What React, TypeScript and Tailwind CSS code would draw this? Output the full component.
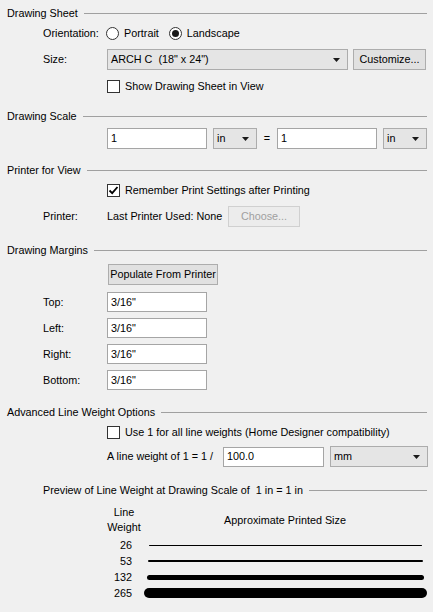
import React from "react";

const FONT = "font-['Liberation_Sans',Arial,sans-serif]";

function SectionHeader({ title, indent = false, className = "" }: { title: string; indent?: boolean; className?: string }) {
  return (
    <div className={`flex items-center h-[14px] pr-[6px] ${indent ? "pl-[43px]" : "pl-[7px]"} ${className}`}>
      <span className="whitespace-pre">{title}</span>
      <div className="flex-1 h-px bg-[#a0a0a0] ml-[6px]" />
    </div>
  );
}

function Arrow() {
  return (
    <svg width="7" height="4" viewBox="0 0 7 4" className="shrink-0">
      <path d="M0 0 L7 0 L3.5 4 Z" fill="#1a1a1a" />
    </svg>
  );
}

function Select({ value, className = "" }: { value: string; className?: string }) {
  return (
    <div
      className={`flex items-center justify-between h-[21px] pl-[3px] pr-[7px] bg-[#e5e5e5] border border-[#acacac] ${className}`}
    >
      <span className="whitespace-pre">{value}</span>
      <Arrow />
    </div>
  );
}

function Input({ value, className = "" }: { value: string; className?: string }) {
  return (
    <div className={`flex items-center h-[20px] pl-[3px] bg-white border border-[#a5a5a5] ${className}`}>
      {value}
    </div>
  );
}

function Button({ label, disabled = false, className = "" }: { label: string; disabled?: boolean; className?: string }) {
  return (
    <div
      className={`flex items-center justify-center h-[21px] border whitespace-nowrap ${
        disabled ? "bg-[#ececec] border-[#d0d0d0] text-[#a0a0a0]" : "bg-[#e1e1e1] border-[#adadad]"
      } ${className}`}
    >
      {label}
    </div>
  );
}

function Checkbox({ checked = false, label }: { checked?: boolean; label: string }) {
  return (
    <div className="flex items-center h-[14px] gap-[5px] pl-[107px]">
      <div className="w-[13px] h-[13px] border border-[#333333] bg-white flex items-center justify-center">
        {checked && (
          <svg width="11" height="11" viewBox="0 0 11 11">
            <path d="M1.5 5.5 L4.2 8.2 L9.5 2" fill="none" stroke="#000" strokeWidth="1.8" />
          </svg>
        )}
      </div>
      <span className="whitespace-nowrap">{label}</span>
    </div>
  );
}

function Radio({ checked = false, label }: { checked?: boolean; label: string }) {
  return (
    <div className="flex items-center gap-[5px]">
      <div className="w-[13px] h-[13px] rounded-full border border-[#333333] bg-white flex items-center justify-center">
        {checked && <div className="w-[7px] h-[7px] rounded-full bg-[#1a1a1a]" />}
      </div>
      <span>{label}</span>
    </div>
  );
}

function LabelRow({ label, children, className = "" }: { label: string; children: React.ReactNode; className?: string }) {
  return (
    <div className={`flex items-center pl-[43px] ${className}`}>
      <span className="w-[64px] shrink-0">{label}</span>
      {children}
    </div>
  );
}

const weights = [
  { n: "26", ml: "ml-[17px]", w: "w-[273px]", h: "h-[1px]" },
  { n: "53", ml: "ml-[16px]", w: "w-[275px]", h: "h-[2px]" },
  { n: "132", ml: "ml-[15px]", w: "w-[277px]", h: "h-[5px]" },
  { n: "265", ml: "ml-[12px]", w: "w-[283px]", h: "h-[10px]" },
];

export default function App() {
  return (
    <div className={`w-[433px] h-[612px] overflow-hidden bg-[#f0f0f0] text-black text-[10.8px] pt-[6px] ${FONT}`}>
      {/* Drawing Sheet */}
      <SectionHeader title="Drawing Sheet" />
      <LabelRow label="Orientation:" className="h-[14px] mt-[6px]">
        <div className="flex items-center gap-[10px] -ml-px">
          <Radio label="Portrait" />
          <Radio checked label="Landscape" />
        </div>
      </LabelRow>
      <LabelRow label="Size:" className="mt-[9px]">
        <Select value={"ARCH C  (18\" x 24\")"} className="w-[241px]" />
        <Button label="Customize..." className="w-[73px] ml-[5px]" />
      </LabelRow>
      <div className="mt-[9px]">
        <Checkbox label="Show Drawing Sheet in View" />
      </div>

      {/* Drawing Scale */}
      <SectionHeader title="Drawing Scale" className="mt-[16px]" />
      <div className="flex items-center pl-[107px] mt-[5px]">
        <Input value="1" className="w-[100px] h-[21px]" />
        <Select value="in" className="w-[44px] ml-[6px]" />
        <span className="w-[20px] text-center">=</span>
        <Input value="1" className="w-[100px] h-[21px]" />
        <Select value="in" className="w-[44px] ml-[6px]" />
      </div>

      {/* Printer for View */}
      <SectionHeader title="Printer for View" className="mt-[14px]" />
      <div className="mt-[6px]">
        <Checkbox checked label="Remember Print Settings after Printing" />
      </div>
      <LabelRow label="Printer:" className="mt-[9px]">
        <span className="whitespace-nowrap w-[113px]">Last Printer Used: None</span>
        <Button label="Choose..." disabled className="w-[72px] h-[20px] ml-[8px]" />
      </LabelRow>

      {/* Drawing Margins */}
      <SectionHeader title="Drawing Margins" className="mt-[16px]" />
      <div className="pl-[108px] mt-[7px]">
        <Button label="Populate From Printer" className="w-[110px] h-[20px]" />
      </div>
      <div className="flex flex-col gap-[6px] mt-[7px]">
        {["Top:", "Left:", "Right:", "Bottom:"].map((l) => (
          <LabelRow key={l} label={l}>
            <Input value={'3/16"'} className="w-[100px]" />
          </LabelRow>
        ))}
      </div>

      {/* Advanced Line Weight Options */}
      <SectionHeader title="Advanced Line Weight Options" className="mt-[15px]" />
      <div className="mt-[6px]">
        <Checkbox label="Use 1 for all line weights (Home Designer compatibility)" />
      </div>
      <div className="flex items-center pl-[107px] mt-[7px]">
        <span className="whitespace-nowrap w-[111px]">A line weight of 1 = 1 /</span>
        <Input value="100.0" className="w-[101px] ml-[5px]" />
        <Select value="mm" className="w-[98px] ml-[6px] h-[20px]" />
      </div>

      <SectionHeader title="Preview of Line Weight at Drawing Scale of  1 in = 1 in" indent className="mt-[16px]" />

      <div className="flex items-center h-[30px] mt-[8px] pl-[107px] leading-[15px]">
        <div className="w-[34px] text-center">
          <div>Line</div>
          <div>Weight</div>
        </div>
        <div className="flex-1 text-center pr-[4px]">Approximate Printed Size</div>
      </div>

      <div className="mt-[2px]">
        {weights.map((w) => (
          <div key={w.n} className="flex items-center h-[16px]">
            <span className="w-[132px] text-right">{w.n}</span>
            <div className={`${w.ml} ${w.w} ${w.h} bg-black rounded-full`} />
          </div>
        ))}
      </div>
    </div>
  );
}
